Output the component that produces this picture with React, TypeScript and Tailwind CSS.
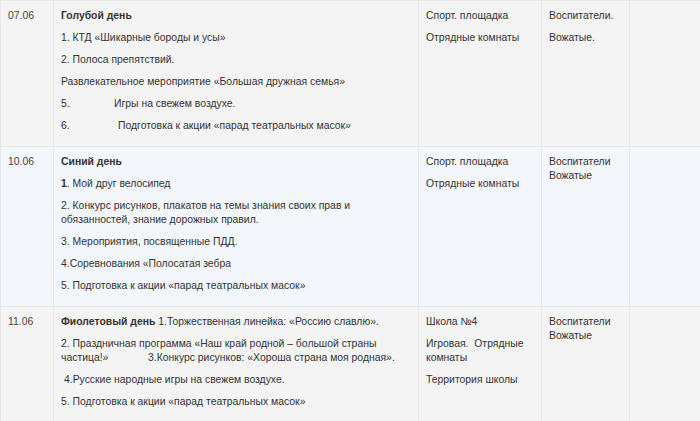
import React from 'react';

const cell = 'border border-[#e6e8eb] align-top pt-[8px] pb-[5px] px-[7px]';
const P = ({ children, className = '' }: { children: React.ReactNode; className?: string }) => (
  <p className={`mb-[8px] leading-[14px] ${className}`}>{children}</p>
);

export default function App() {
  return (
    <div className="w-[700px] h-[421px] overflow-hidden bg-white">
      <table
        className="w-[720px] border-collapse table-fixed text-[10.4px] text-[#333]"
        style={{ fontFamily: '"Liberation Sans", Arial, sans-serif' }}
      >
        <colgroup>
          <col className="w-[53px]" />
          <col className="w-[365px]" />
          <col className="w-[123px]" />
          <col className="w-[88px]" />
          <col />
        </colgroup>
        <tbody>
          {/* 07.06 */}
          <tr className="bg-[#f4f4f4]">
            <td className={cell}>
              <P className="text-[#444]">07.06</P>
            </td>
            <td className={cell}>
              <P className="font-bold">Голубой день</P>
              <P>1. КТД «Шикарные бороды и усы»</P>
              <P>2. Полоса препятствий.</P>
              <P>Развлекательное мероприятие «Большая дружная семья»</P>
              <P>
                <span className="inline-block w-[53px]">5.</span>Игры на свежем воздухе.
              </P>
              <P>
                <span className="inline-block w-[57px]">6.</span>Подготовка к акции «парад театральных масок»
              </P>
            </td>
            <td className={cell}>
              <P>Спорт. площадка</P>
              <P>Отрядные комнаты</P>
            </td>
            <td className={cell}>
              <P>Воспитатели.</P>
              <P>Вожатые.</P>
            </td>
            <td className={cell}></td>
          </tr>

          {/* 10.06 */}
          <tr className="bg-[#f3f6fa]">
            <td className={cell}>
              <P className="text-[#444]">10.06</P>
            </td>
            <td className={cell}>
              <P className="font-bold">Синий день</P>
              <P>
                <b>1</b>. Мой друг велосипед
              </P>
              <P>
                2. Конкурс рисунков, плакатов на темы знания своих прав и
                <br />
                обязанностей, знание дорожных правил.
              </P>
              <P>3. Мероприятия, посвященные ПДД.</P>
              <P>4.Соревнования «Полосатая зебра</P>
              <P>5. Подготовка к акции «парад театральных масок»</P>
            </td>
            <td className={cell}>
              <P>Спорт. площадка</P>
              <P>Отрядные комнаты</P>
            </td>
            <td className={cell}>
              <P>
                Воспитатели
                <br />
                Вожатые
              </P>
            </td>
            <td className={cell}></td>
          </tr>

          {/* 11.06 */}
          <tr className="bg-[#f4f4f4]">
            <td className={cell}>
              <P className="text-[#444]">11.06</P>
            </td>
            <td className={cell}>
              <P>
                <b>Фиолетовый день</b> 1.Торжественная линейка: «Россию славлю».
              </P>
              <P className="whitespace-nowrap">
                2. Праздничная программа «Наш край родной – большой страны
                <br />
                <span className="inline-block w-[87px]">частица!»</span>3.Конкурс рисунков: «Хороша страна моя родная».
              </P>
              <P className="pl-[3px]">4.Русские народные игры на свежем воздухе.</P>
              <P>5. Подготовка к акции «парад театральных масок»</P>
            </td>
            <td className={cell}>
              <P>Школа №4</P>
              <P>
                Игровая.&nbsp; Отрядные
                <br />
                комнаты
              </P>
              <P>Территория школы</P>
            </td>
            <td className={cell}>
              <P>
                Воспитатели
                <br />
                Вожатые
              </P>
            </td>
            <td className={cell}></td>
          </tr>
        </tbody>
      </table>
    </div>
  );
}
